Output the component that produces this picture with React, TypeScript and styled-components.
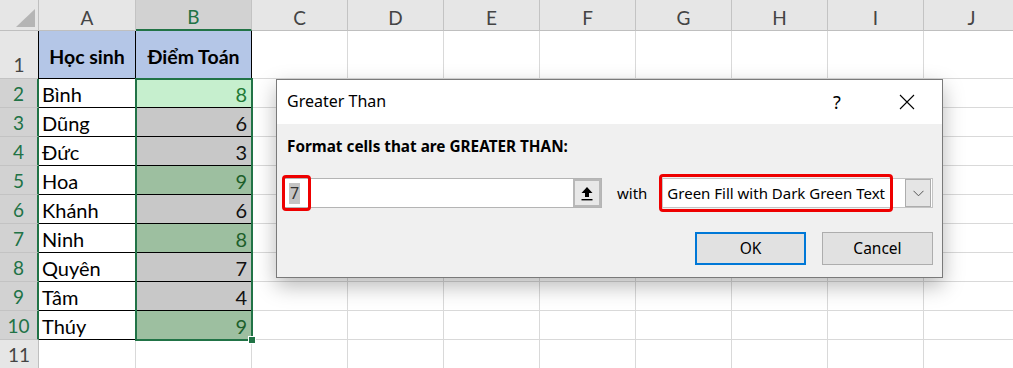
import React from 'react';
import styled, { createGlobalStyle, css } from 'styled-components';

const GlobalStyle = createGlobalStyle`
    html, body {
        margin: 0;
        padding: 0;
        background: #ffffff;
    }
    body {
        overflow: hidden;
    }
`;

type Fill = 'active' | 'grey' | 'green';

const COLUMNS = ['A', 'B', 'C', 'D', 'E', 'F', 'G', 'H', 'I', 'J'];

const STUDENTS: { name: string; score: number; fill: Fill }[] = [
    { name: 'Bình', score: 8, fill: 'active' },
    { name: 'Dũng', score: 6, fill: 'grey' },
    { name: 'Đức', score: 3, fill: 'grey' },
    { name: 'Hoa', score: 9, fill: 'green' },
    { name: 'Khánh', score: 6, fill: 'grey' },
    { name: 'Ninh', score: 8, fill: 'green' },
    { name: 'Quyên', score: 7, fill: 'grey' },
    { name: 'Tâm', score: 4, fill: 'grey' },
    { name: 'Thúy', score: 9, fill: 'green' },
];

const FILLS: Record<Fill, { bg: string; color: string }> = {
    active: { bg: '#c6efce', color: '#1f7a36' },
    grey: { bg: '#c8c8c8', color: '#111111' },
    green: { bg: '#9dbfa0', color: '#1d5f2b' },
};

const EXCEL_GREEN = '#217346';

/* ---------- sheet ---------- */

const Sheet = styled.div`
    position: relative;
    width: 1013px;
    height: 368px;
    overflow: hidden;
    font-family: Lato, 'Liberation Sans', sans-serif;
`;

const Grid = styled.div`
    display: grid;
    grid-template-columns: 39px 97px 116px repeat(8, 96px);
    grid-template-rows: 31px 48px repeat(10, 29px);
`;

const CornerCell = styled.div`
    position: relative;
    background: #e6e6e6;
    border-right: 1px solid #bfbfbf;
    border-bottom: 1px solid #bfbfbf;
    box-sizing: border-box;

    &::after {
        content: '';
        position: absolute;
        right: 3px;
        bottom: 3px;
        border-style: solid;
        border-width: 0 0 18px 19px;
        border-color: transparent transparent #b5b5b5 transparent;
    }
`;

const ColHeader = styled.div<{ $selected?: boolean }>`
    display: flex;
    align-items: center;
    justify-content: center;
    box-sizing: border-box;
    background: ${({ $selected }) => ($selected ? '#d2d2d2' : '#e6e6e6')};
    color: ${({ $selected }) => ($selected ? EXCEL_GREEN : '#444444')};
    border-right: 1px solid #c3c3c3;
    border-bottom: ${({ $selected }) => ($selected ? `2px solid ${EXCEL_GREEN}` : '1px solid #bfbfbf')};
    font-size: 19px;
    padding-top: 4px;
`;

const RowHeader = styled.div<{ $selected?: boolean }>`
    display: flex;
    align-items: flex-end;
    justify-content: center;
    box-sizing: border-box;
    padding-bottom: 1px;
    background: ${({ $selected }) => ($selected ? '#d2d2d2' : '#e6e6e6')};
    color: ${({ $selected }) => ($selected ? EXCEL_GREEN : '#444444')};
    border-right: ${({ $selected }) => ($selected ? `2px solid ${EXCEL_GREEN}` : '1px solid #bfbfbf')};
    border-bottom: 1px solid #c3c3c3;
    font-size: 19px;
    line-height: 24px;
`;

const Cell = styled.div`
    box-sizing: border-box;
    border-right: 1px solid #d9d9d9;
    border-bottom: 1px solid #d9d9d9;
`;

const TableCell = styled.div<{ $fill?: Fill; $align?: 'left' | 'right' }>`
    display: flex;
    align-items: flex-end;
    box-sizing: border-box;
    border-right: 1px solid #000000;
    border-bottom: 1px solid #000000;
    padding: 0 4px 1px 3px;
    font-size: 20px;
    line-height: 24px;
    color: #000000;
    justify-content: ${({ $align }) => ($align === 'right' ? 'flex-end' : 'flex-start')};
    ${({ $fill }) =>
        $fill &&
        css`
            background: ${FILLS[$fill].bg};
            color: ${FILLS[$fill].color};
        `}
`;

const HeadCell = styled.div<{ $first?: boolean }>`
    display: flex;
    align-items: center;
    justify-content: center;
    box-sizing: border-box;
    background: #b4c6e7;
    border-right: 1px solid #000000;
    border-bottom: 1px solid #000000;
    font-size: 19.5px;
    font-weight: 700;
    color: #000000;
    padding-top: 3px;
    ${({ $first }) =>
        $first &&
        css`
            box-shadow: -1px 0 0 #000000;
        `}
`;

const Selection = styled.div`
    position: absolute;
    left: 135px;
    top: 78px;
    width: 118px;
    height: 263px;
    box-sizing: border-box;
    border: 2px solid ${EXCEL_GREEN};
    pointer-events: none;
`;

const FillHandle = styled.div`
    position: absolute;
    right: -5px;
    bottom: -5px;
    width: 6px;
    height: 6px;
    background: ${EXCEL_GREEN};
    border: 1px solid #ffffff;
`;

/* ---------- dialog ---------- */

const Dialog = styled.div`
    position: absolute;
    left: 276px;
    top: 79px;
    width: 667px;
    height: 199px;
    box-sizing: border-box;
    display: flex;
    flex-direction: column;
    background: #f0f0f0;
    border: 1px solid #7a7a7a;
    box-shadow: 0 8px 20px rgba(0, 0, 0, 0.28);
    font-family: 'Noto Sans', 'Open Sans', sans-serif;
    color: #000000;
`;

const TitleBar = styled.div`
    display: flex;
    align-items: center;
    height: 44px;
    background: #ffffff;
    padding-left: 10px;
`;

const Title = styled.div`
    flex: 1;
    font-size: 16px;
    padding-bottom: 2px;
`;

const TitleButton = styled.div`
    display: flex;
    align-items: center;
    justify-content: center;
    width: 70px;
    height: 100%;
    font-size: 18px;
`;

const Body = styled.div`
    flex: 1;
    display: flex;
    flex-direction: column;
    padding: 12px 9px 12px 6px;
`;

const Label = styled.div`
    padding-left: 4px;
    font-size: 15.3px;
    font-weight: 700;
    line-height: 20px;
`;

const InputRow = styled.div`
    display: flex;
    align-items: center;
    margin-top: 22px;
    height: 30px;
`;

const RefInput = styled.div`
    position: relative;
    display: flex;
    align-items: center;
    width: 319px;
    height: 30px;
    box-sizing: border-box;
    background: #ffffff;
    border: 1px solid #b4b4b4;
    padding-left: 5px;
    font-size: 16px;
`;

const SelectedText = styled.span`
    background: #c4c4c4;
    color: #333333;
    padding: 0 1px;
    line-height: 21px;
`;

const CollapseButton = styled.div`
    display: flex;
    align-items: center;
    justify-content: center;
    margin-left: auto;
    width: 28px;
    height: 28px;
    box-sizing: border-box;
    background: #e8e8e8;
    border: 2px solid #b8b8b8;
`;

const WithText = styled.span`
    margin: 0 15px;
    font-size: 15px;
    padding-bottom: 1px;
`;

const Combo = styled.div`
    position: relative;
    flex: 1;
    display: flex;
    align-items: center;
    height: 30px;
    box-sizing: border-box;
    background: #ffffff;
    border: 1px solid #c4c4c4;
    padding-left: 4px;
    font-size: 15px;
`;

const ComboArrow = styled.div`
    display: flex;
    align-items: center;
    justify-content: center;
    margin-left: auto;
    margin-right: 1px;
    width: 26px;
    height: 28px;
    box-sizing: border-box;
    background: #e5e5e5;
    border: 1px solid #adadad;
`;

const Highlight = styled.div<{ $left: number; $top: number; $width: number; $height: number }>`
    position: absolute;
    left: ${({ $left }) => $left}px;
    top: ${({ $top }) => $top}px;
    width: ${({ $width }) => $width}px;
    height: ${({ $height }) => $height}px;
    box-sizing: border-box;
    border: 3px solid #ee0000;
    border-radius: 4px;
    pointer-events: none;
`;

const ButtonRow = styled.div`
    display: flex;
    justify-content: flex-end;
    gap: 16px;
    margin-top: 24px;
`;

const Button = styled.div<{ $default?: boolean }>`
    display: flex;
    align-items: center;
    justify-content: center;
    width: 111px;
    height: 33px;
    box-sizing: border-box;
    background: #e1e1e1;
    border: ${({ $default }) => ($default ? '2px solid #0078d7' : '1px solid #adadad')};
    font-size: 15.5px;
    padding-bottom: 1px;
`;

const CloseIcon = () => (
    <svg width="16" height="16" viewBox="0 0 16 16">
        <path d="M1 1 L15 15 M15 1 L1 15" stroke="#000" strokeWidth="1.1" fill="none" />
    </svg>
);

const UpArrowIcon = () => (
    <svg width="12" height="15" viewBox="0 0 12 15">
        <path d="M6 1 L11.5 7 L8 7 L8 11 L4 11 L4 7 L0.5 7 Z" fill="#000" />
        <rect x="0.5" y="13" width="11" height="1.4" fill="#000" />
    </svg>
);

const ChevronIcon = () => (
    <svg width="11" height="7" viewBox="0 0 11 7">
        <path d="M0.5 0.8 L5.5 5.8 L10.5 0.8" stroke="#555" strokeWidth="1" fill="none" />
    </svg>
);

export default function App() {
    const emptyCols = COLUMNS.slice(2);

    return (
        <>
            <GlobalStyle />
            <Sheet>
                <Grid>
                    <CornerCell />
                    {COLUMNS.map((col) => (
                        <ColHeader key={col} $selected={col === 'B'}>
                            {col}
                        </ColHeader>
                    ))}

                    <RowHeader>1</RowHeader>
                    <HeadCell $first>Học sinh</HeadCell>
                    <HeadCell>Điểm Toán</HeadCell>
                    {emptyCols.map((col) => (
                        <Cell key={col} />
                    ))}

                    {STUDENTS.map((s, i) => (
                        <React.Fragment key={s.name}>
                            <RowHeader $selected>{i + 2}</RowHeader>
                            <TableCell>{s.name}</TableCell>
                            <TableCell $fill={s.fill} $align="right">
                                {s.score}
                            </TableCell>
                            {emptyCols.map((col) => (
                                <Cell key={col} />
                            ))}
                        </React.Fragment>
                    ))}

                    <RowHeader>11</RowHeader>
                    {COLUMNS.map((col) => (
                        <Cell key={col} />
                    ))}
                </Grid>

                <Selection>
                    <FillHandle />
                </Selection>

                <Dialog>
                    <TitleBar>
                        <Title>Greater Than</Title>
                        <TitleButton>?</TitleButton>
                        <TitleButton>
                            <CloseIcon />
                        </TitleButton>
                    </TitleBar>
                    <Body>
                        <Label>Format cells that are GREATER THAN:</Label>
                        <InputRow>
                            <RefInput>
                                <SelectedText>7</SelectedText>
                                <CollapseButton>
                                    <UpArrowIcon />
                                </CollapseButton>
                                <Highlight $left={-2} $top={-4} $width={29} $height={36} />
                            </RefInput>
                            <WithText>with</WithText>
                            <Combo>
                                Green Fill with Dark Green Text
                                <ComboArrow>
                                    <ChevronIcon />
                                </ComboArrow>
                                <Highlight $left={-4} $top={-5} $width={234} $height={38} />
                            </Combo>
                        </InputRow>
                        <ButtonRow>
                            <Button $default>OK</Button>
                            <Button>Cancel</Button>
                        </ButtonRow>
                    </Body>
                </Dialog>
            </Sheet>
        </>
    );
}
